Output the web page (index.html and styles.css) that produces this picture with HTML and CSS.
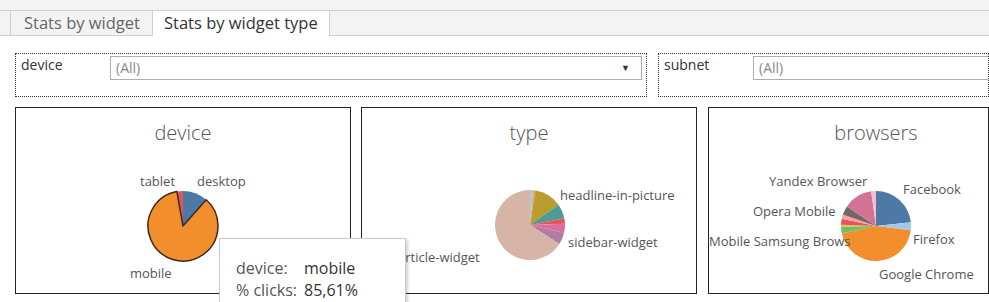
FILE: index.html
```html
<!DOCTYPE html>
<html lang="en">
<head>
    <meta charset="UTF-8">
    <title>Stats by widget type</title>
    <link rel="stylesheet" href="styles.css">
</head>
<body>
    <div class="topbar"></div>

    <div class="tabs">
        <div class="tab">Stats by widget</div>
        <div class="tab active">Stats by widget type</div>
    </div>

    <div class="dashboard">
        <!-- Фильтры -->
        <div class="filters">
            <div class="filter">
                <span class="filter-label">device</span>
                <div class="select">(All)<span class="arrow">&#9660;</span></div>
            </div>
            <div class="filter clipped">
                <span class="filter-label">subnet</span>
                <div class="select">(All)</div>
            </div>
        </div>

        <!-- Графики -->
        <div class="charts">
            <div class="card">
                <div class="card-body">
                    <h2 class="card-title">device</h2>
                    <svg class="pie" width="334" height="144" viewBox="0 0 334 144">
                        <path d="M167,77 L167,42 A35,35 0 0 1 190.19,50.79 Z" fill="#4e79a7"/>
                        <path d="M167,77 L160.92,42.53 A35,35 0 0 1 167,42 Z" fill="#e15759"/>
                        <path d="M167,77 L190.19,50.79 A35,35 0 1 1 160.92,42.53 Z" fill="#f28e2b" stroke="#3b2a1c" stroke-width="1.5" stroke-linejoin="round"/>
                        <text x="124" y="37">tablet</text>
                        <text x="181" y="37">desktop</text>
                        <text x="114" y="129">mobile</text>
                    </svg>
                </div>
            </div>

            <div class="card">
                <div class="card-body">
                    <h2 class="card-title">type</h2>
                    <svg class="pie" width="334" height="144" viewBox="0 0 334 144">
                        <path d="M168,76 L168,41 A35,35 0 0 1 171.05,41.13 Z" fill="#a0cbe8"/>
                        <path d="M168,76 L171.05,41.13 A35,35 0 0 1 173.48,41.43 Z" fill="#f6a34c"/>
                        <path d="M168,76 L173.48,41.43 A35,35 0 0 1 196.49,55.68 Z" fill="#b89c2e"/>
                        <path d="M168,76 L196.49,55.68 A35,35 0 0 1 202.36,69.32 Z" fill="#4f9a94"/>
                        <path d="M168,76 L202.36,69.32 A35,35 0 0 1 202.98,74.78 Z" fill="#e15759"/>
                        <path d="M168,76 L202.98,74.78 A35,35 0 0 1 202.10,83.87 Z" fill="#dc6f9a"/>
                        <path d="M168,76 L202.10,83.87 A35,35 0 0 1 197.35,95.06 Z" fill="#b27ba2"/>
                        <path d="M168,76 L197.35,95.06 A35,35 0 1 1 168,41 Z" fill="#d6b4a6"/>
                        <text x="198" y="51">headline-in-picture</text>
                        <text x="206" y="98">sidebar-widget</text>
                        <text x="36" y="113">article-widget</text>
                    </svg>
                </div>
            </div>

            <div class="card clipped">
                <div class="card-body">
                    <h2 class="card-title">browsers</h2>
                    <svg class="pie" width="334" height="144" viewBox="0 0 334 144">
                        <path d="M167,77 L167,42 A35,35 0 0 1 201.81,73.34 Z" fill="#4e79a7"/>
                        <path d="M167,77 L201.81,73.34 A35,35 0 0 1 201.74,81.27 Z" fill="#a0cbe8"/>
                        <path d="M167,77 L201.74,81.27 A35,35 0 0 1 132.82,84.52 Z" fill="#f28e2b"/>
                        <path d="M167,77 L132.82,84.52 A35,35 0 0 1 132.01,77.61 Z" fill="#72c062"/>
                        <path d="M167,77 L132.01,77.61 A35,35 0 0 1 132.02,75.78 Z" fill="#e8c84a"/>
                        <path d="M167,77 L132.02,75.78 A35,35 0 0 1 132.76,69.72 Z" fill="#e15759"/>
                        <path d="M167,77 L132.76,69.72 A35,35 0 0 1 133.91,65.60 Z" fill="#ff9d9a"/>
                        <path d="M167,77 L133.91,65.60 A35,35 0 0 1 137.98,57.43 Z" fill="#6f6866"/>
                        <path d="M167,77 L137.98,57.43 A35,35 0 0 1 162.13,42.34 Z" fill="#d37295"/>
                        <path d="M167,77 L162.13,42.34 A35,35 0 0 1 167,42 Z" fill="#f8bcd0"/>
                        <text x="60" y="37">Yandex Browser</text>
                        <text x="194" y="45">Facebook</text>
                        <text x="44" y="67">Opera Mobile</text>
                        <text x="0" y="97">Mobile Samsung Brows</text>
                        <text x="204" y="95">Firefox</text>
                        <text x="170" y="130">Google Chrome</text>
                    </svg>
                </div>
            </div>
        </div>
    </div>

    <!-- Подсказка над графиком -->
    <div class="tooltip">
        <div class="tooltip-row"><span class="tooltip-key">device:</span><span class="tooltip-value">mobile</span></div>
        <div class="tooltip-row"><span class="tooltip-key">% clicks:</span><span class="tooltip-value">85,61%</span></div>
    </div>
</body>
</html>
```

FILE: styles.css
```css
:root {
    --bar-color: #f3f3f3;
    --line-color: #cfcfcf;
    --text-color: #555;
}

* {
    box-sizing: border-box;
    margin: 0;
    padding: 0;
    font-family: 'Open Sans', 'Noto Sans', sans-serif;
}

body {
    background: white;
    width: 989px;
    height: 302px;
    overflow: hidden;
    position: relative;
}

.topbar {
    height: 11px;
    background: var(--bar-color);
    border-bottom: 1px solid var(--line-color);
}

.tabs {
    display: flex;
    height: 25px;
    padding-left: 10px;
    background: var(--bar-color);
    border-bottom: 1px solid var(--line-color);
}

.tab {
    width: 142px;
    height: 25px;
    padding-left: 13px;
    font-size: 16.5px;
    line-height: 23px;
    color: #666;
    white-space: nowrap;
    border-left: 1px solid var(--line-color);
}

.tab.active {
    width: 178px;
    padding-left: 11px;
    background: white;
    color: #333;
    border-right: 1px solid var(--line-color);
}

.dashboard {
    width: 989px;
    padding-left: 15px;
}

.filters {
    display: flex;
    gap: 11px;
    margin-top: 17px;
}

.filter {
    display: flex;
    align-items: flex-start;
    width: 632px;
    height: 44px;
    padding: 2px 4px 0 5px;
    border: 1px dotted #333;
    flex-shrink: 0;
}

.filter.clipped {
    width: 331px;
    overflow: hidden;
}

.filter-label {
    width: 89px;
    flex-shrink: 0;
    font-size: 14px;
    line-height: 18px;
    color: #333;
}

.select {
    position: relative;
    width: 532px;
    flex-shrink: 0;
    height: 24px;
    padding-left: 5px;
    border: 1px solid #adadad;
    font-size: 14px;
    line-height: 22px;
    color: #888;
}

.arrow {
    position: absolute;
    right: 11px;
    top: 0;
    font-size: 9px;
    color: #333;
}

.charts {
    display: flex;
    gap: 10px;
    margin-top: 10px;
}

.card {
    width: 336px;
    height: 187px;
    border: 1px solid #222;
    flex-shrink: 0;
    overflow: hidden;
}

.card.clipped {
    width: 281px;
    margin-left: 1px;
}

.card-body {
    width: 334px;
}

.card-title {
    height: 41px;
    padding-top: 13px;
    text-align: center;
    font-size: 20px;
    font-weight: 300;
    line-height: 24px;
    color: #555;
}

.pie {
    display: block;
}

.pie text {
    font-family: 'Open Sans', sans-serif;
    font-size: 13px;
    fill: var(--text-color);
}

.tooltip {
    position: absolute;
    left: 219px;
    top: 238px;
    width: 187px;
    height: 64px;
    padding: 18px 0 0 16px;
    background: white;
    border: 1px solid #c9c9c9;
    border-bottom: none;
    box-shadow: 2px 2px 3px rgba(0, 0, 0, 0.18);
}

.tooltip-row {
    display: flex;
    font-size: 16px;
    line-height: 22px;
}

.tooltip-key {
    width: 68px;
    color: var(--text-color);
}

.tooltip-value {
    color: #333;
}
```
